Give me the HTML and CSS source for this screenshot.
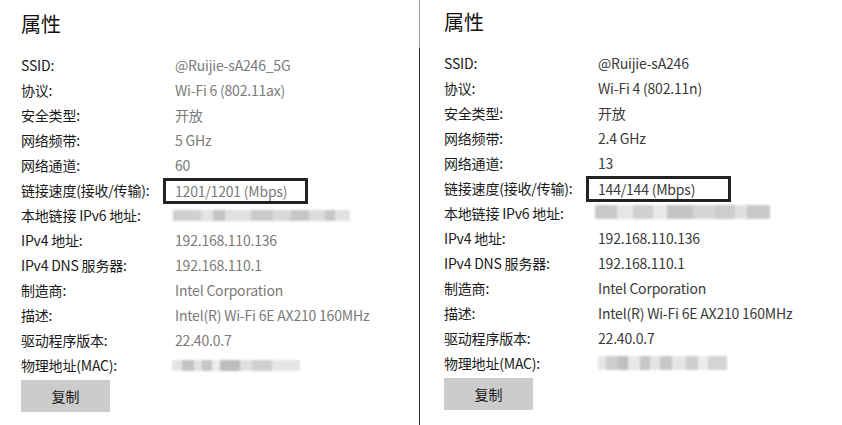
FILE: index.html
```html
<!DOCTYPE html>
<html lang="zh-CN">
<head>
<meta charset="utf-8">
<link rel="stylesheet" href="styles.css">
</head>
<body>
<div class="page">
  <section class="panel panel-left">
    <h1 class="title">属性</h1>
    <div class="props">
      <div class="label">SSID:</div><div class="value">@Ruijie-sA246_5G</div>
      <div class="label">协议:</div><div class="value">Wi-Fi 6 (802.11ax)</div>
      <div class="label">安全类型:</div><div class="value">开放</div>
      <div class="label">网络频带:</div><div class="value">5 GHz</div>
      <div class="label">网络通道:</div><div class="value">60</div>
      <div class="label">链接速度(接收/传输):</div><div class="value"><span class="boxed">1201/1201 (Mbps)</span></div>
      <div class="label">本地链接 IPv6 地址:</div><div class="value"><span class="blur blur-v6a"></span></div>
      <div class="label">IPv4 地址:</div><div class="value">192.168.110.136</div>
      <div class="label">IPv4 DNS 服务器:</div><div class="value">192.168.110.1</div>
      <div class="label">制造商:</div><div class="value">Intel Corporation</div>
      <div class="label">描述:</div><div class="value">Intel(R) Wi-Fi 6E AX210 160MHz</div>
      <div class="label">驱动程序版本:</div><div class="value">22.40.0.7</div>
      <div class="label">物理地址(MAC):</div><div class="value"><span class="blur blur-maca"></span></div>
    </div>
    <button class="copy">复制</button>
  </section>
  <div class="divider"></div>
  <section class="panel panel-right">
    <h1 class="title">属性</h1>
    <div class="props">
      <div class="label">SSID:</div><div class="value">@Ruijie-sA246</div>
      <div class="label">协议:</div><div class="value">Wi-Fi 4 (802.11n)</div>
      <div class="label">安全类型:</div><div class="value">开放</div>
      <div class="label">网络频带:</div><div class="value">2.4 GHz</div>
      <div class="label">网络通道:</div><div class="value">13</div>
      <div class="label">链接速度(接收/传输):</div><div class="value"><span class="boxed">144/144 (Mbps)</span></div>
      <div class="label">本地链接 IPv6 地址:</div><div class="value"><span class="blur blur-v6b"></span></div>
      <div class="label">IPv4 地址:</div><div class="value">192.168.110.136</div>
      <div class="label">IPv4 DNS 服务器:</div><div class="value">192.168.110.1</div>
      <div class="label">制造商:</div><div class="value">Intel Corporation</div>
      <div class="label">描述:</div><div class="value">Intel(R) Wi-Fi 6E AX210 160MHz</div>
      <div class="label">驱动程序版本:</div><div class="value">22.40.0.7</div>
      <div class="label">物理地址(MAC):</div><div class="value"><span class="blur blur-macb"></span></div>
    </div>
    <button class="copy">复制</button>
  </section>
</div>
</body>
</html>
```

FILE: styles.css
```css
* { box-sizing: border-box; }
html, body {
  margin: 0;
  padding: 0;
  background: #fff;
}
body {
  font-family: "Noto Sans CJK SC", "Noto Sans", sans-serif;
  color: #1a1a1a;
  width: 842px;
  height: 425px;
  overflow: hidden;
}
.page {
  display: flex;
  height: 425px;
}
.panel {
  display: flex;
  flex-direction: column;
  align-items: flex-start;
}
.panel-left {
  width: 419px;
  padding: 10px 0 0 21px;
}
.panel-right {
  flex: 1;
  padding: 8px 0 0 24px;
}
.divider {
  width: 1px;
  height: 425px;
  background: linear-gradient(#9a9a9a 0, #9a9a9a 48px, #2a2a2a 48px, #2a2a2a 100%);
}
.title {
  margin: 0;
  font-size: 20px;
  line-height: 28px;
  font-weight: 400;
  color: #111;
}
.props {
  margin-top: 15px;
  display: grid;
  grid-template-columns: 154px auto;
  grid-auto-rows: 25px;
  font-size: 14px;
  line-height: 25px;
  letter-spacing: -0.2px;
}
.label {
  color: #1a1a1a;
  white-space: nowrap;
}
.value {
  white-space: nowrap;
  display: flex;
  align-items: center;
}
.panel-left .value { color: #7a7a7a; }
.panel-right .value { color: #3a3a3a; }
.boxed {
  display: inline-block;
  width: 145px;
  height: 26px;
  line-height: 20px;
  margin-left: -12px;
  padding-left: 9px;
  border: 3px solid #222;
}
.blur {
  display: block;
  height: 11px;
  filter: blur(0.8px);
}
.blur-v6a {
  width: 177px;
  margin-left: -2px;
  background: linear-gradient(90deg,
    #cfcfcf 0 28px, #e4e4e4 28px 40px, #c4c4c4 40px 52px, #e0e0e0 52px 78px,
    #cacaca 78px 100px, #d8d8d8 100px 118px, #c6c6c6 118px 136px, #dcdcdc 136px 152px,
    #c8c8c8 152px 162px, #e2e2e2 162px 177px);
}
.blur-maca {
  width: 128px;
  margin-left: -3px;
  background: linear-gradient(90deg,
    #e4e4e4 0 10px, #c2c2c2 10px 22px, #e2e2e2 22px 30px, #c6c6c6 30px 40px,
    #ececec 40px 48px, #bdbdbd 48px 68px, #e0e0e0 68px 80px, #cfcfcf 80px 100px,
    #e6e6e6 100px 128px);
}
.blur-v6b {
  width: 175px;
  height: 14px;
  margin-left: -3px;
  margin-top: -4px;
  background: linear-gradient(90deg,
    #c8c8c8 0 22px, #e6e6e6 22px 38px, #d0d0d0 38px 58px, #e8e8e8 58px 72px,
    #c4c4c4 72px 98px, #d6d6d6 98px 120px, #cdcdcd 120px 140px, #e0e0e0 140px 152px,
    #c8c8c8 152px 175px);
}
.blur-macb {
  width: 129px;
  height: 14px;
  margin-left: 0;
  margin-top: -2px;
  background: linear-gradient(90deg,
    #e6e6e6 0 8px, #cdcdcd 8px 20px, #bfbfbf 20px 30px, #e8e8e8 30px 42px,
    #c6c6c6 42px 52px, #e4e4e4 52px 62px, #c8c8c8 62px 74px, #e6e6e6 74px 88px,
    #cecece 88px 100px, #ececec 100px 110px, #d4d4d4 110px 129px);
}
.copy {
  margin-top: 2px;
  width: 89px;
  height: 32px;
  border: none;
  background: #cccccc;
  color: #1a1a1a;
  font-family: inherit;
  font-size: 14px;
  padding: 0;
}
```
